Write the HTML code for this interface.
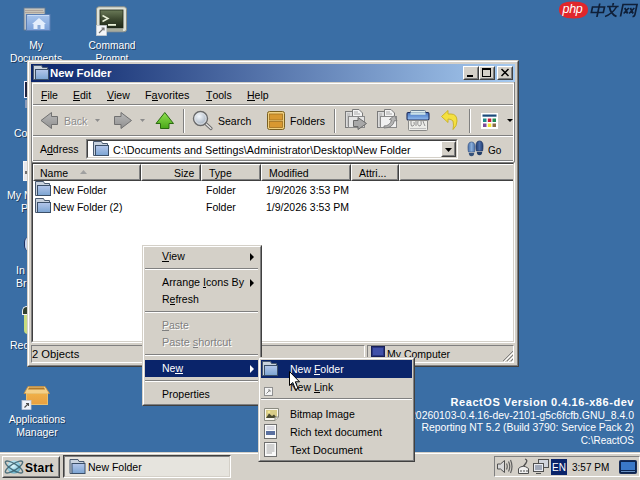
<!DOCTYPE html>
<html><head><meta charset="utf-8">
<style>
*{box-sizing:border-box}
html,body{margin:0;padding:0}
body{width:640px;height:480px;overflow:hidden;position:relative;background:#3a6ea5;font-family:"Liberation Sans",sans-serif;font-size:11px;color:#000}
.a{position:absolute}
.t{position:absolute;white-space:nowrap;line-height:13px;font-size:10.5px}
.dl{color:#fff;text-align:center;text-shadow:1px 1px 0 rgba(10,20,40,.6)}
.raised{background:#d4d0c8;border-style:solid;border-width:1px;border-color:#fff #404040 #404040 #fff}
.r2{position:absolute;inset:0;border:1px solid;border-color:#d4d0c8 #808080 #808080 #d4d0c8}
.mu{position:relative}
.mu:after{content:"";position:absolute;left:0;right:0;bottom:0px;height:1px;background:currentColor}
.hsep{position:absolute;height:2px;border-top:1px solid #808080;border-bottom:1px solid #fff}
svg{position:absolute;overflow:visible}
</style></head>
<body>
<svg width="0" height="0" style="position:absolute">
 <defs>
  <linearGradient id="fg" x1="0" y1="0" x2="0" y2="1"><stop offset="0" stop-color="#b4c6ea"/><stop offset="1" stop-color="#7ba4d2"/></linearGradient>
  <symbol id="folder" viewBox="0 0 16 16">
   <path d="M0.5,0.5H8.5L9.5,2.5H14.5V14.5H0.5Z" fill="#c9d2de" stroke="#4a5a70"/>
   <rect x="2.5" y="4.5" width="13" height="10" fill="url(#fg)" stroke="#3b4f68"/>
  </symbol>
 </defs>
</svg>

<!-- ===== desktop icons ===== -->
<!-- My Documents -->
<svg style="left:23px;top:7px" width="28" height="25" viewBox="0 0 28 25">
 <defs><linearGradient id="mdg" x1="0" y1="0" x2="0" y2="1"><stop offset="0" stop-color="#a8c4ec"/><stop offset="1" stop-color="#7aa0d8"/></linearGradient></defs>
 <rect x="1" y="1" width="21" height="22" fill="#b8c0c8" stroke="#6a7a8a" stroke-width=".8"/>
 <path d="M2,2.5H21M2,4.5H21M2,6.5H21" stroke-width="1.2" stroke="#c8c4b8"/>
 <path d="M2,3.5H20M2,5.5H21" stroke-width=".8" stroke="#a89a90"/>
 <rect x="3.5" y="7.5" width="23.5" height="16" fill="url(#mdg)" stroke="#5a7eb4"/>
 <path d="M4.5,8.5H26" stroke="#c8dcf8"/>
 <path d="M9,17L16,11L23,17H21.5V22H10.5V17Z" fill="#e4eefc"/>
 <rect x="14.5" y="18" width="3" height="4" fill="#8aaad8"/>
</svg>
<div class="t dl" style="left:6px;top:39px;width:60px;font-size:10.3px">My</div>
<div class="t dl" style="left:2px;top:52px;width:68px;font-size:10.3px">Documents</div>
<!-- Command prompt -->
<svg style="left:96px;top:6px" width="31" height="30" viewBox="0 0 31 30">
 <defs><linearGradient id="cg" x1="0" y1="0" x2="0" y2="1"><stop offset="0" stop-color="#6a7a58"/><stop offset=".5" stop-color="#3e4a30"/><stop offset="1" stop-color="#1e2818"/></linearGradient></defs>
 <rect x="0.5" y="0.8" width="30" height="25" rx="2.5" fill="#dfe3d8" stroke="#8a8e86"/>
 <rect x="4" y="4" width="23" height="18" fill="url(#cg)" stroke="#20281a" stroke-width=".8"/>
 <path d="M6.5,9.5L12,12.5L6.5,15.5" fill="none" stroke="#e8f0d8" stroke-width="1.5"/>
 <rect x="12" y="18" width="8" height="1.8" fill="#e8f0d8"/>
 <rect x="4" y="23" width="23" height="2" fill="#a8ac9c"/>
 <rect x="0.5" y="19.5" width="10" height="10" fill="#f4f6f8" stroke="#c8ccd0" stroke-width=".8"/>
 <path d="M3,27L8,22M5.5,22H8V24.5" stroke="#707070" fill="none" stroke-width="1.1"/>
</svg>
<div class="t dl" style="left:79px;top:39px;width:66px;font-size:10.2px">Command</div>
<div class="t dl" style="left:79px;top:52px;width:66px;font-size:10.2px">Prompt</div>

<!-- partially hidden icons (left column) -->
<div class="a" style="left:24px;top:81px;width:4px;height:17px;border:1px solid #f0f0ff;border-right:none;background:#1c2240"></div>
<div class="a" style="left:25px;top:100px;width:3px;height:8px;background:#8a9ab8"></div>
<div class="t dl" style="left:14px;top:127px">Co</div>
<div class="a" style="left:23px;top:161px;width:5px;height:20px;background:#e8e8ec;border:1px solid #f8f8f8;border-right:none"></div>
<div class="a" style="left:25px;top:171px;width:3px;height:3px;background:#707070"></div>
<div class="t dl" style="left:7px;top:189px">My N</div>
<div class="t dl" style="left:21px;top:202px">P</div>
<div class="a" style="left:24px;top:237px;width:5px;height:14px;border-radius:7px 0 0 7px;background:#c8d4ec;border-left:1px solid #1c3060"></div>
<div class="t dl" style="left:16px;top:264px">In</div>
<div class="t dl" style="left:16px;top:277px">Br</div>
<div class="a" style="left:22px;top:306px;width:6px;height:9px;border:1px solid #f0f0f0;border-right:none;border-radius:5px 0 0 0;background:#304030"></div>
<div class="a" style="left:24px;top:315px;width:4px;height:19px;border-radius:0 0 0 4px;background:#c8dc80"></div>
<div class="t dl" style="left:10px;top:339px">Rec</div>
<!-- Applications manager -->
<svg style="left:21px;top:385px" width="30" height="26" viewBox="0 0 30 26">
 <defs><linearGradient id="bx" x1="0" y1="0" x2="0" y2="1"><stop offset="0" stop-color="#f0b048"/><stop offset="1" stop-color="#e8a040"/></linearGradient></defs>
 <path d="M7,1.5H24L28.5,8.5H3Z" fill="#f4d088" stroke="#c89040" stroke-width=".8"/>
 <path d="M8,2.5H23L24,4.5H7Z" fill="#b07828"/>
 <rect x="5.5" y="8.5" width="21" height="11" fill="url(#bx)" stroke="#e8c070"/>
 <rect x="1" y="15.5" width="9" height="9" fill="#f0f4fc" stroke="#c0c8d8" stroke-width=".8"/>
 <path d="M3.5,22.5L7.5,18.5M5,18.5H7.5V21" stroke="#505050" fill="none" stroke-width="1.1"/>
</svg>
<div class="t dl" style="left:2px;top:413px;width:70px">Applications</div>
<div class="t dl" style="left:2px;top:426px;width:70px">Manager</div>

<!-- php watermark -->
<svg style="left:557px;top:0px" width="83" height="20" viewBox="0 0 83 20">
 <path d="M2,9.5Q2,1.5 16,1.5Q31,1.5 31,9.5Q31,18.5 16.5,18.5Q2,18.5 2,9.5Z" fill="#e0262b"/>
 <text x="5.5" y="13.2" font-family="Liberation Sans" font-style="italic" font-size="12.5" fill="#fff" letter-spacing="-0.3">php</text>
 <g stroke="#0f1f38" stroke-width="1.7" fill="none" transform="skewX(-12) translate(2,0)">
  <path d="M35,7H47V12.5H35Z M41.5,3.5V17"/>
  <path d="M55,3V5.5 M49.5,6.5H61 M52,7Q54.5,14 61,16.5 M59,7Q56,14 49.5,16.5"/>
  <path d="M65,16.5V4.5H79V14.5Q79,16.5 77,16.5 M67.5,8L71.5,13.5 M71.5,8L67.5,13.5 M73,8L77,13.5 M77,8L73,13.5"/>
 </g>
</svg>

<!-- ===== window ===== -->
<div class="a" style="left:27px;top:60px;width:492px;height:307px;background:#d4d0c8;border:1px solid;border-color:#d4d0c8 #404040 #404040 #d4d0c8">
 <div class="a" style="left:0;top:0;right:0;bottom:0;border:1px solid;border-color:#fff #808080 #808080 #fff"></div>
</div>
<!-- title bar -->
<div class="a" style="left:31px;top:64px;width:484px;height:18px;background:linear-gradient(to right,#0a246a,#a6caf0)"></div>
<svg style="left:33px;top:65px" width="16" height="16"><use href="#folder" width="16" height="16"/></svg>
<div class="t" style="left:50px;top:67px;color:#fff;font-weight:bold;font-size:11.4px">New Folder</div>
<!-- caption buttons -->
<div class="a raised" style="left:463px;top:66px;width:16px;height:14px"><div class="r2"></div><div class="a" style="left:3px;top:8px;width:6px;height:2px;background:#000"></div></div>
<div class="a raised" style="left:479px;top:66px;width:16px;height:14px"><div class="r2"></div><div class="a" style="left:2px;top:1px;width:9px;height:9px;border:1px solid #000;border-top-width:2px"></div></div>
<div class="a raised" style="left:497px;top:66px;width:16px;height:14px"><div class="r2"></div>
 <svg style="left:3px;top:2px" width="8" height="7" viewBox="0 0 8 7"><path d="M0.5,0L7.5,7M7.5,0L0.5,7" stroke="#000" stroke-width="1.5"/></svg></div>

<!-- client edge -->
<div class="a" style="left:31px;top:82px;width:1px;height:80px;background:#808080"></div>
<div class="a" style="left:32px;top:83px;width:482px;height:1px;background:#fff"></div>
<div class="a" style="left:32px;top:83px;width:1px;height:78px;background:#fff"></div>
<div class="a" style="left:513px;top:84px;width:1px;height:77px;background:#fff"></div>
<div class="a" style="left:514px;top:82px;width:1px;height:80px;background:#808080"></div>

<!-- menu -->
<div class="t" style="left:41px;top:89px"><span class="mu">F</span>ile</div>
<div class="t" style="left:73px;top:89px"><span class="mu">E</span>dit</div>
<div class="t" style="left:107px;top:89px"><span class="mu">V</span>iew</div>
<div class="t" style="left:145px;top:89px;font-size:10.8px">F<span class="mu">a</span>vorites</div>
<div class="t" style="left:206px;top:89px"><span class="mu">T</span>ools</div>
<div class="t" style="left:247px;top:89px"><span class="mu">H</span>elp</div>
<div class="hsep" style="left:33px;top:104px;width:480px"></div>

<!-- toolbar -->
<svg style="left:40px;top:111px" width="20" height="20" viewBox="0 0 20 20">
 <defs><linearGradient id="gg" x1="0" y1="0" x2="0" y2="1"><stop offset="0" stop-color="#b8b8b8"/><stop offset="1" stop-color="#909090"/></linearGradient></defs>
 <path d="M1,9.5L11.5,1.5V5.5H17.5V13.5H11.5V17.5Z" fill="url(#gg)" stroke="#707070"/>
</svg>
<div class="t" style="left:64px;top:115px;color:#8c8c8c;text-shadow:1px 1px 0 #fff">Back</div>
<svg style="left:95px;top:119px" width="6" height="4"><path d="M0,0H5L2.5,3Z" fill="#8c8c8c"/></svg>
<svg style="left:113px;top:111px" width="20" height="20" viewBox="0 0 20 20">
 <path d="M18.5,9.5L8,1.5V5.5H1.5V13.5H8V17.5Z" fill="url(#gg)" stroke="#707070"/>
</svg>
<svg style="left:140px;top:119px" width="6" height="4"><path d="M0,0H5L2.5,3Z" fill="#8c8c8c"/></svg>
<svg style="left:155px;top:111px" width="20" height="20" viewBox="0 0 20 20">
 <defs><linearGradient id="ug" x1="0" y1="0" x2="0" y2="1"><stop offset="0" stop-color="#90e050"/><stop offset="1" stop-color="#48a818"/></linearGradient></defs>
 <path d="M9.8,1.5L18.5,12.5H14V17.5H5.5V12.5H1Z" fill="url(#ug)" stroke="#2a6a10"/>
</svg>
<div class="a" style="left:183px;top:109px;width:2px;height:24px;border-left:1px solid #808080;border-right:1px solid #fff"></div>
<svg style="left:191px;top:109px" width="24" height="22" viewBox="0 0 24 22">
 <defs><radialGradient id="lg" cx=".4" cy=".35" r=".7"><stop offset="0" stop-color="#f4f8fc"/><stop offset="1" stop-color="#9aa8b8"/></radialGradient></defs>
 <path d="M13.5,13.5L20,19.5" stroke="#6a6a6a" stroke-width="3.2" stroke-linecap="round"/>
 <path d="M13.5,13.5L20,19.5" stroke="#e8e8e8" stroke-width="1.2" stroke-linecap="round"/>
 <circle cx="9.5" cy="9.5" r="7" fill="url(#lg)" stroke="#6a6a6a" stroke-width="1.4"/>
 <circle cx="9.5" cy="9.5" r="5.6" fill="none" stroke="#e8e8e8" stroke-width=".8"/>
</svg>
<div class="t" style="left:218px;top:115px">Search</div>
<svg style="left:266px;top:110px" width="20" height="21" viewBox="0 0 20 21">
 <rect x="1.5" y="1.5" width="17" height="18" rx="2" fill="#f0d080" stroke="#7a6020"/>
 <rect x="3.5" y="4" width="13" height="6" fill="#d89830" stroke="#a07020" stroke-width=".8"/>
 <rect x="3.5" y="11.5" width="13" height="6" fill="#d89830" stroke="#a07020" stroke-width=".8"/>
</svg>
<div class="t" style="left:290px;top:115px">Folders</div>
<div class="a" style="left:334px;top:109px;width:2px;height:24px;border-left:1px solid #808080;border-right:1px solid #fff"></div>
<!-- move to -->
<svg style="left:344px;top:108px" width="24" height="23" viewBox="0 0 24 23">
 <rect x="1.5" y="3.5" width="12" height="16" fill="#dcdcdc" stroke="#7a7a7a"/>
 <rect x="3" y="5" width="3" height="13" fill="#c4c4c4"/>
 <path d="M8.5,1.5H15L18.5,5V9H8.5Z" fill="#f4f4f4" stroke="#7a7a7a"/>
 <path d="M10,4H14M10,6H16" stroke="#a8a8a8"/>
 <rect x="4.5" y="8.5" width="16" height="11" fill="#e4e4e4" stroke="#8a8a8a"/>
 <path d="M9.5,12.5H14V9.5L22.5,15.5L14,21.5V18.5H9.5Z" fill="#a8a8a8" stroke="#6a6a6a"/>
</svg>
<!-- copy to -->
<svg style="left:376px;top:108px" width="24" height="23" viewBox="0 0 24 23">
 <rect x="1.5" y="3.5" width="12" height="16" fill="#dcdcdc" stroke="#7a7a7a"/>
 <rect x="3" y="5" width="3" height="13" fill="#c4c4c4"/>
 <path d="M8.5,1.5H15L18.5,5V9H8.5Z" fill="#f4f4f4" stroke="#7a7a7a"/>
 <path d="M10,4H14M10,6H16" stroke="#a8a8a8"/>
 <rect x="4.5" y="8.5" width="16" height="11" fill="#f0f0f0" stroke="#8a8a8a"/>
 <path d="M8,18Q14,18 15.5,12L13.5,11.5L18.5,7.5L21,13L18.5,12.5Q17,20 8,20Z" fill="#b4b4b4" stroke="#7a7a7a" stroke-width=".9"/>
</svg>
<!-- delete -->
<svg style="left:406px;top:109px" width="24" height="23" viewBox="0 0 24 23">
 <defs><linearGradient id="dg" x1="0" y1="0" x2="0" y2="1"><stop offset="0" stop-color="#f0f8f8"/><stop offset="1" stop-color="#a8c8c8"/></linearGradient>
 <linearGradient id="db" x1="0" y1="0" x2="0" y2="1"><stop offset="0" stop-color="#4a70b8"/><stop offset=".5" stop-color="#6a98d8"/><stop offset="1" stop-color="#98c0f0"/></linearGradient></defs>
 <rect x="4.5" y="1.5" width="15" height="5" rx="1" fill="url(#dg)" stroke="#5a7088" stroke-width=".9"/>
 <rect x="1" y="3.5" width="22" height="7.5" rx="1.2" fill="url(#db)" stroke="#1c2c5c" stroke-width="1.1"/>
 <rect x="4.5" y="3.2" width="15" height="2.6" fill="#c8e0e8"/>
 <path d="M2.5,11.5H21.5V20.5Q21.5,21.5 20.5,21.5H3.5Q2.5,21.5 2.5,20.5Z" fill="#ecece8" stroke="#8a8a88"/>
 <path d="M5,12V15Q5,18 7,17Q9,16 8,13M10,12V17M12,12Q11,17 14,17Q16,16 15,12M17,12Q18,15 19,17" stroke="#909090" fill="none" stroke-width="1"/>
 <path d="M4,19.5H20" stroke="#c0c0c0"/>
</svg>
<!-- undo -->
<svg style="left:440px;top:109px" width="20" height="22" viewBox="0 0 20 22">
 <path d="M1.5,7.5L8,1.5V5H11Q17,5 17,12Q17,17 13,20.5Q14,16 13,12Q11.5,10 8,10V13.5Z" fill="#f4e040" stroke="#c8b020" stroke-width=".9"/>
</svg>
<div class="a" style="left:469px;top:109px;width:2px;height:24px;border-left:1px solid #808080;border-right:1px solid #fff"></div>
<!-- views -->
<svg style="left:481px;top:113px" width="17" height="16" viewBox="0 0 17 16">
 <rect x="0" y="0" width="17" height="16" fill="#fff"/>
 <rect x="1.5" y="1.5" width="14" height="2.2" fill="#1a4a7a"/>
 <rect x="2" y="5.5" width="3.5" height="3.5" fill="#1f8a8a"/><rect x="6.8" y="5.5" width="3.5" height="3.5" fill="#c02040"/><rect x="11.5" y="5.5" width="3.5" height="3.5" fill="#1f8a50"/>
 <rect x="2" y="10.5" width="3.5" height="3.5" fill="#7a4a98"/><rect x="6.8" y="10.5" width="3.5" height="3.5" fill="#f4e830"/><rect x="11.5" y="10.5" width="3.5" height="3.5" fill="#8a6a48"/>
</svg>
<svg style="left:507px;top:119px" width="6" height="4"><path d="M0,0H6L3,3Z" fill="#000"/></svg>
<div class="hsep" style="left:33px;top:135px;width:480px"></div>

<!-- address -->
<div class="t" style="left:40px;top:143px">A<span class="mu">d</span>dress</div>
<div class="a" style="left:86px;top:139px;width:372px;height:20px;background:#fff;border:1px solid;border-color:#808080 #fff #fff #808080"><div class="a" style="inset:0;border:1px solid;border-color:#404040 #d4d0c8 #d4d0c8 #404040"></div></div>
<svg style="left:93px;top:141px" width="16" height="16"><use href="#folder" width="16" height="16"/></svg>
<div class="t" style="left:113px;top:144px;font-size:10.76px">C:\Documents and Settings\Administrator\Desktop\New Folder</div>
<div class="a raised" style="left:441px;top:141px;width:15px;height:16px"><div class="r2"></div>
 <svg style="left:3px;top:6px" width="8" height="5"><path d="M0,0H7L3.5,4Z" fill="#000"/></svg></div>
<svg style="left:467px;top:140px" width="17" height="17" viewBox="0 0 17 17">
 <defs><linearGradient id="fp1" x1="0" y1="0" x2="1" y2="0"><stop offset="0" stop-color="#4a70a8"/><stop offset=".5" stop-color="#88acd8"/><stop offset="1" stop-color="#4a70a8"/></linearGradient>
 <linearGradient id="fp2" x1="0" y1="0" x2="1" y2="0"><stop offset="0" stop-color="#203c70"/><stop offset=".5" stop-color="#4a6ca8"/><stop offset="1" stop-color="#203c70"/></linearGradient></defs>
 <path d="M4.5,2Q8,2 8,7Q8,10.5 7.5,12H1.5Q1,10.5 1,7Q1,2 4.5,2Z" fill="url(#fp1)" stroke="#3a5888" stroke-width=".7"/>
 <path d="M1.8,13H7.2Q7,16.3 4.5,16.3Q2,16.3 1.8,13Z" fill="#34507a"/>
 <path d="M12.5,1Q16,1 16,6Q16,9.5 15.5,11H9.5Q9,9.5 9,6Q9,1 12.5,1Z" fill="url(#fp2)" stroke="#1a3060" stroke-width=".7"/>
 <path d="M9.8,12H15.2Q15,15.3 12.5,15.3Q10,15.3 9.8,12Z" fill="#243e68"/>
</svg>
<div class="t" style="left:488px;top:144px;font-size:10px">Go</div>
<div class="hsep" style="left:33px;top:160px;width:480px"></div>

<!-- list view -->
<div class="a" style="left:31px;top:162px;width:484px;height:181px;background:#fff;border:1px solid;border-color:#808080 #fff #fff #808080"><div class="a" style="inset:0;border:1px solid;border-color:#404040 #d4d0c8 #d4d0c8 #404040"></div></div>
<!-- header buttons -->
<div class="a raised" style="left:33px;top:164px;width:108px;height:17px"><div class="r2"></div></div>
<div class="a raised" style="left:141px;top:164px;width:60px;height:17px"><div class="r2"></div></div>
<div class="a raised" style="left:201px;top:164px;width:60px;height:17px"><div class="r2"></div></div>
<div class="a raised" style="left:261px;top:164px;width:90px;height:17px"><div class="r2"></div></div>
<div class="a raised" style="left:351px;top:164px;width:48px;height:17px"><div class="r2"></div></div>
<div class="a raised" style="left:399px;top:164px;width:114px;height:17px;border-right:none"><div class="r2" style="border-right:none"></div></div>
<div class="t" style="left:40px;top:167px">Name</div>
<svg style="left:80px;top:170px" width="8" height="5"><path d="M0,4H7L3.5,0Z" fill="#a0a0a0"/></svg>
<div class="t" style="left:174px;top:167px">Size</div>
<div class="t" style="left:209px;top:167px">Type</div>
<div class="t" style="left:269px;top:167px">Modified</div>
<div class="t" style="left:359px;top:167px">Attri...</div>
<!-- rows -->
<svg style="left:35px;top:181px" width="16" height="16"><use href="#folder" width="16" height="16"/></svg>
<svg style="left:35px;top:198px" width="16" height="16"><use href="#folder" width="16" height="16"/></svg>
<div class="t" style="left:53px;top:184px">New Folder</div>
<div class="t" style="left:53px;top:201px">New Folder (2)</div>
<div class="t" style="left:206px;top:184px">Folder</div>
<div class="t" style="left:206px;top:201px">Folder</div>
<div class="t" style="left:266px;top:184px">1/9/2026 3:53 PM</div>
<div class="t" style="left:266px;top:201px">1/9/2026 3:53 PM</div>

<!-- status bar -->
<div class="a" style="left:31px;top:345px;width:334px;height:18px;border:1px solid;border-color:#808080 #fff #fff #808080"></div>
<div class="a" style="left:367px;top:345px;width:147px;height:18px;border:1px solid;border-color:#808080 #fff #fff #808080"></div>
<div class="t" style="left:32px;top:348px;font-size:11.2px">2 Objects</div>
<svg style="left:371px;top:346px" width="14" height="12" viewBox="0 0 14 12">
 <rect x="0.5" y="0.5" width="13" height="10" fill="#2a3680" stroke="#182058"/>
 <rect x="2" y="2" width="10" height="7" fill="#4050a8"/>
</svg>
<div class="t" style="left:387px;top:348px">My Computer</div>
<svg style="left:502px;top:350px" width="12" height="12" viewBox="0 0 12 12">
 <path d="M11,1L1,11M11,5L5,11M11,9L9,11" stroke="#808080" stroke-width="1"/>
 <path d="M12,2L2,12M12,6L6,12M12,10L10,12" stroke="#fff" stroke-width="1"/>
</svg>

<!-- ===== version text ===== -->
<div class="t" style="right:6px;top:396px;color:#fff;font-weight:bold;text-align:right;font-size:11px;letter-spacing:0.55px">ReactOS Version 0.4.16-x86-dev</div>
<div class="t" style="right:6px;top:409px;color:#fff;text-align:right;font-size:10.45px">20260103-0.4.16-dev-2101-g5c6fcfb.GNU_8.4.0</div>
<div class="t" style="right:6px;top:421px;color:#fff;text-align:right;font-size:10.39px">Reporting NT 5.2 (Build 3790: Service Pack 2)</div>
<div class="t" style="right:6px;top:434px;color:#fff;text-align:right;font-size:10px">C:\ReactOS</div>

<!-- ===== taskbar ===== -->
<div class="a" style="left:0;top:452px;width:640px;height:28px;background:#d4d0c8;border-top:1px solid #d4d0c8"><div class="a" style="left:0;top:0;right:0;height:1px;background:#fff"></div></div>
<div class="a raised" style="left:2px;top:456px;width:58px;height:22px"><div class="r2"></div></div>
<svg style="left:3px;top:457px" width="22" height="20" viewBox="0 0 22 20">
 <defs><radialGradient id="sg" cx=".4" cy=".35" r=".75"><stop offset="0" stop-color="#e8fcff"/><stop offset=".6" stop-color="#90d0e4"/><stop offset="1" stop-color="#4a98b0"/></radialGradient></defs>
 <circle cx="11" cy="10" r="6.6" fill="url(#sg)"/>
 <ellipse cx="11" cy="10" rx="10" ry="3.2" transform="rotate(32 11 10)" fill="none" stroke="#3a6070" stroke-width="1.4" opacity=".85"/>
 <ellipse cx="11" cy="10" rx="10" ry="3.2" transform="rotate(-32 11 10)" fill="none" stroke="#3a6070" stroke-width="1.4" opacity=".85"/>
</svg>
<div class="t" style="left:25px;top:462px;font-weight:bold;font-size:12px;letter-spacing:.25px">Start</div>
<div class="a" style="left:63px;top:455px;width:168px;height:23px;background:#e6e4de;border:1px solid;border-color:#404040 #fff #fff #404040"><div class="a" style="inset:0;border:1px solid;border-color:#808080 #d4d0c8 #d4d0c8 #808080"></div></div>
<svg style="left:69px;top:459px" width="17" height="16"><use href="#folder" width="17" height="16"/></svg>
<div class="t" style="left:88px;top:461px">New Folder</div>

<!-- tray -->
<div class="a" style="left:494px;top:456px;width:146px;height:21px;border:1px solid;border-color:#808080 #fff #fff #808080"></div>
<svg style="left:496px;top:458px" width="17" height="17" viewBox="0 0 17 17">
 <path d="M1.5,6H4.5L8.5,2.5V14.5L4.5,11H1.5Z" fill="#d8d8d8" stroke="#505050"/>
 <path d="M10.5,5.5Q12,8.5 10.5,11.5M12.5,3.5Q15,8.5 12.5,13.5M14.5,2Q17.5,8.5 14.5,15" fill="none" stroke="#606060" stroke-width="1.2"/>
</svg>
<svg style="left:517px;top:458px" width="13" height="17" viewBox="0 0 13 17">
 <path d="M8,1Q11,2 9,5L6,9" fill="none" stroke="#505050" stroke-width="1.3"/>
 <path d="M1.5,10.5Q6,6 11.5,10.5V15.5H1.5Z" fill="#f0f0f0" stroke="#505050"/>
 <path d="M3,13H5M6,13H8M9,13H11" stroke="#505050"/>
</svg>
<svg style="left:533px;top:458px" width="16" height="17" viewBox="0 0 16 17">
 <rect x="5.5" y="1.5" width="10" height="8" fill="#d0d4dc" stroke="#505050"/>
 <rect x=".5" y="5.5" width="10" height="8" fill="#e8eaf0" stroke="#505050"/>
 <rect x="2" y="7" width="7" height="5" fill="#a0a8b8"/>
 <path d="M3,15.5H8" stroke="#505050"/>
</svg>
<div class="a" style="left:551px;top:459px;width:16px;height:16px;background:#0a246a"></div>
<div class="t" style="left:552px;top:461px;color:#fff;font-size:10px">EN</div>
<div class="t" style="left:572px;top:461px;font-size:10px">3:57 PM</div>
<svg style="left:619px;top:460px" width="18" height="14" viewBox="0 0 18 14">
 <rect x=".5" y=".5" width="17" height="13" rx="1" fill="#0c2450" stroke="#1a2e58"/>
 <rect x="2" y="2" width="14" height="8" fill="#3a78c8"/>
 <rect x="2" y="11" width="14" height="1" fill="#6a90c0"/>
</svg>

<!-- ===== context menu ===== -->
<div class="a" style="left:142px;top:245px;width:120px;height:161px;background:#d4d0c8;border:1px solid;border-color:#d4d0c8 #404040 #404040 #d4d0c8"><div class="a" style="inset:0;border:1px solid;border-color:#fff #808080 #808080 #fff"></div></div>
<div class="t" style="left:162px;top:250px"><span class="mu">V</span>iew</div>
<svg style="left:250px;top:253px" width="5" height="8"><path d="M0,0V8L4,4Z" fill="#000"/></svg>
<div class="hsep" style="left:145px;top:268px;width:113px"></div>
<div class="t" style="left:162px;top:276px;font-size:10.7px">Arrange <span class="mu">I</span>cons By</div>
<svg style="left:250px;top:279px" width="5" height="8"><path d="M0,0V8L4,4Z" fill="#000"/></svg>
<div class="t" style="left:162px;top:293px">R<span class="mu">e</span>fresh</div>
<div class="hsep" style="left:145px;top:311px;width:113px"></div>
<div class="t" style="left:162px;top:319px;color:#808080;text-shadow:1px 1px 0 #fff"><span class="mu">P</span>aste</div>
<div class="t" style="left:162px;top:336px;color:#808080;text-shadow:1px 1px 0 #fff;font-size:10.85px">Paste <span class="mu">s</span>hortcut</div>
<div class="hsep" style="left:145px;top:354px;width:113px"></div>
<div class="a" style="left:145px;top:360px;width:113px;height:17px;background:#0a246a"></div>
<div class="t" style="left:162px;top:362px;color:#fff">Ne<span class="mu">w</span></div>
<svg style="left:250px;top:365px" width="5" height="8"><path d="M0,0V8L4,4Z" fill="#fff"/></svg>
<div class="hsep" style="left:145px;top:380px;width:113px"></div>
<div class="t" style="left:162px;top:388px">Properties</div>

<!-- ===== submenu ===== -->
<div class="a" style="left:258px;top:357px;width:157px;height:105px;background:#d4d0c8;border:1px solid;border-color:#d4d0c8 #404040 #404040 #d4d0c8"><div class="a" style="inset:0;border:1px solid;border-color:#fff #808080 #808080 #fff"></div></div>
<div class="a" style="left:261px;top:360px;width:151px;height:18px;background:#0a246a"></div>
<svg style="left:262px;top:361px" width="16" height="16"><use href="#folder" width="16" height="16"/></svg>
<div class="t" style="left:290px;top:363px;color:#fff">New <span class="mu">F</span>older</div>
<svg style="left:264px;top:387px" width="9" height="9" viewBox="0 0 9 9"><rect x=".5" y=".5" width="8" height="8" fill="#f4f4f4" stroke="#909090"/><path d="M2.5,6.5L6,3M4,3H6V5" stroke="#8a8a8a" fill="none"/></svg>
<div class="t" style="left:290px;top:381px">New <span class="mu">L</span>ink</div>
<div class="hsep" style="left:261px;top:398px;width:151px"></div>
<svg style="left:264px;top:408px" width="15" height="13" viewBox="0 0 15 13">
 <path d="M0.5,0.5H14.5V9L11,12.5H0.5Z" fill="#f8f6ee" stroke="#8a8a80"/>
 <rect x="2" y="2" width="11" height="8" fill="#d8cc88"/>
 <path d="M2,10L5,5.5L8,8L10,6.5L13,10Z" fill="#4a4a30"/>
 <circle cx="5" cy="4" r="1.3" fill="#f4e890"/>
 <path d="M14.5,9H11V12.5" fill="#e0e0d8" stroke="#8a8a80"/>
</svg>
<div class="t" style="left:290px;top:408px">Bitmap Image</div>
<svg style="left:264px;top:424px" width="13" height="15" viewBox="0 0 13 15">
 <rect x=".5" y=".5" width="12" height="14" fill="#fafafa" stroke="#707070"/>
 <path d="M2.5,3H10.5M2.5,5H10.5" stroke="#b8b8c8"/>
 <rect x="2" y="7" width="9" height="4" fill="#5a70a0"/>
</svg>
<div class="t" style="left:290px;top:426px;font-size:10.74px">Rich text document</div>
<svg style="left:264px;top:442px" width="13" height="15" viewBox="0 0 13 15">
 <rect x=".5" y=".5" width="12" height="14" fill="#fafafa" stroke="#707070"/>
 <path d="M2.5,3H10.5M2.5,5H10.5M2.5,7H10.5M2.5,9H10.5M2.5,11H8" stroke="#a8a8a8"/>
</svg>
<div class="t" style="left:290px;top:444px;font-size:10.9px">Text Document</div>

<!-- mouse cursor -->
<svg style="left:289px;top:371px" width="12" height="20" viewBox="0 0 12 20">
 <path d="M0.5,0.5V14.5L3.8,11.5L6.5,18.5L9,17.5L6.3,10.8H10.5Z" fill="#fff" stroke="#000"/>
</svg>

</body></html>
